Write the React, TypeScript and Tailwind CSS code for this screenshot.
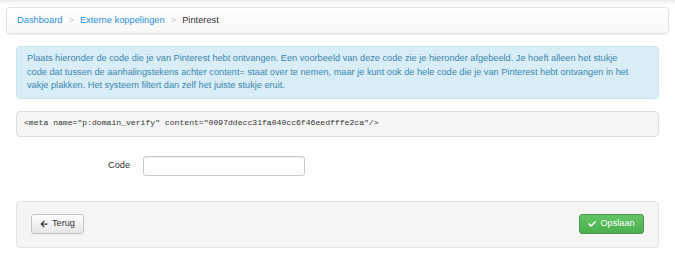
import { FaArrowLeft, FaCheck } from 'react-icons/fa';

export default function App() {
  return (
    <div className="min-h-[254px] bg-white font-['Liberation_Sans',Arial,sans-serif] text-[9.2px] text-[#333]">
      <div className="h-[5px] bg-gradient-to-b from-[#ececec] to-white" />
      <div className="px-[6px] pt-[2px]">
        <ul className="flex h-[27px] items-center rounded-[4px] border border-[#e2e2e2] bg-gradient-to-b from-white to-[#f7f7f7] px-[10px] text-[9.3px] shadow-[0_1px_1px_rgba(0,0,0,0.06)]">
          <li>
            <a className="text-[#2a8fd6]">Dashboard</a>
          </li>
          <li className="px-[6px] text-[#ccc]">&gt;</li>
          <li>
            <a className="text-[#2a8fd6]">Externe koppelingen</a>
          </li>
          <li className="px-[6px] text-[#ccc]">&gt;</li>
          <li className="text-[#333]">Pinterest</li>
        </ul>
      </div>

      <div className="px-[16px] pt-[12px]">
        <div className="rounded-[4px] border border-[#c8e6f2] bg-[#d9edf7] py-[5px] pl-[10px] pr-[20px] leading-[13.5px] text-[#3a87ad]">
          Plaats hieronder de code die je van Pinterest hebt ontvangen. Een voorbeeld van deze code zie je hieronder afgebeeld. Je hoeft alleen het stukje code dat tussen de aanhalingstekens achter content= staat over te nemen, maar je kunt ook de hele code die je van Pinterest hebt ontvangen in het vakje plakken. Het systeem filtert dan zelf het juiste stukje eruit.
        </div>

        <pre className="mt-[12px] flex h-[26px] items-center rounded-[4px] border border-[#dcdcdc] bg-[#f5f5f5] px-[7px] font-['Liberation_Mono',monospace] text-[8.1px] text-[#333]">
          {'<meta name="p:domain_verify" content="0097ddecc31fa040cc6f46eedfffe2ca"/>'}
        </pre>

        <div className="mt-[19px] flex items-center">
          <label className="w-[114px] text-right text-[#333]">Code</label>
          <input
            type="text"
            className="ml-[13px] h-[20px] w-[162px] rounded-[3px] border border-[#ccc] bg-white shadow-[inset_0_1px_1px_rgba(0,0,0,0.075)] outline-none"
          />
        </div>

        <div className="mt-[25px] flex h-[47px] items-center justify-between rounded-[4px] border border-[#e3e3e3] bg-[#f5f5f5] px-[14px]">
          <button className="flex h-[20px] w-[53px] items-center justify-center gap-[4px] rounded-[3px] border border-[#c5c5c5] bg-gradient-to-b from-white to-[#e6e6e6] text-[#333] shadow-[0_1px_2px_rgba(0,0,0,0.05)]">
            <FaArrowLeft className="h-[8px] w-[8px]" />
            Terug
          </button>
          <button className="flex h-[20px] w-[65px] items-center justify-center gap-[4px] rounded-[3px] border border-[#4a9a4a] bg-gradient-to-b from-[#62c462] to-[#4cae4c] text-white">
            <FaCheck className="h-[8px] w-[8px]" />
            Opslaan
          </button>
        </div>
      </div>
    </div>
  );
}
